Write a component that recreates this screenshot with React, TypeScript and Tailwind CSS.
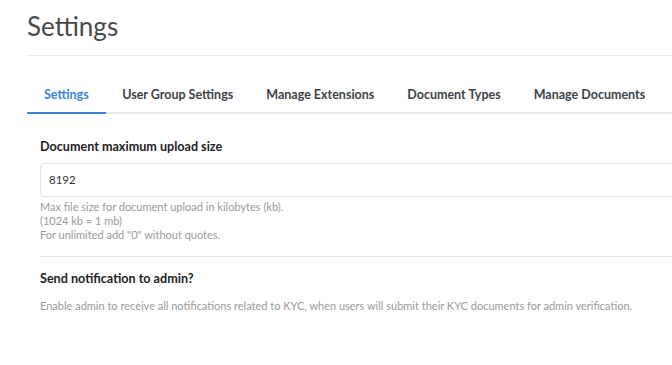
const tabs = [
  "Settings",
  "User Group Settings",
  "Manage Extensions",
  "Document Types",
  "Manage Documents",
];

export default function App() {
  return (
    <div className="min-h-[365px] overflow-hidden bg-white font-['Lato','Liberation_Sans',sans-serif]">
      <div className="w-[760px] pl-[27px]">
        <h1 className="h-[56px] border-b border-[#e9ecef] pt-[9px] text-[26px] leading-[34px] text-[#4a4a4a]">
          Settings
        </h1>

        <div className="mt-[22px] flex border-b-2 border-[#e6e9ec] whitespace-nowrap">
          {tabs.map((tab, i) => (
            <div
              key={tab}
              className={
                i === 0
                  ? "-mb-[2px] shrink-0 border-b-2 border-[#3a86d4] px-[17px] pt-[8px] pb-[8px] text-[12.5px] leading-[18px] font-bold text-[#3a86d4]"
                  : "shrink-0 px-[16.5px] pt-[8px] pb-[8px] text-[12.5px] leading-[18px] font-bold text-[#3d4348]"
              }
            >
              {tab}
            </div>
          ))}
        </div>

        <div className="pl-[13px] whitespace-nowrap">
          <div className="mt-[24px] text-[12.6px] leading-[18px] font-bold text-[#222]">
            Document maximum upload size
          </div>
          <div className="mt-[7px] flex h-[34px] items-center rounded-[4px] border border-[#dfe3e7] pl-[8px] text-[11.5px] text-[#333]">
            8192
          </div>
          <div className="mt-[3px] text-[11px] leading-[14px] text-[#9a9a9a]">
            <p>Max file size for document upload in kilobytes (kb).</p>
            <p>(1024 kb = 1 mb)</p>
            <p>For unlimited add "0" without quotes.</p>
          </div>

          <div className="mt-[14px] border-t border-[#e6e9ec]" />

          <div className="mt-[13px] text-[12.6px] leading-[18px] font-bold text-[#222]">
            Send notification to admin?
          </div>
          <div className="mt-[10px] text-[11px] leading-[16px] text-[#9a9a9a]">
            Enable admin to receive all notifications related to KYC, when users
            will submit their KYC documents for admin verification.
          </div>
        </div>
      </div>
    </div>
  );
}
